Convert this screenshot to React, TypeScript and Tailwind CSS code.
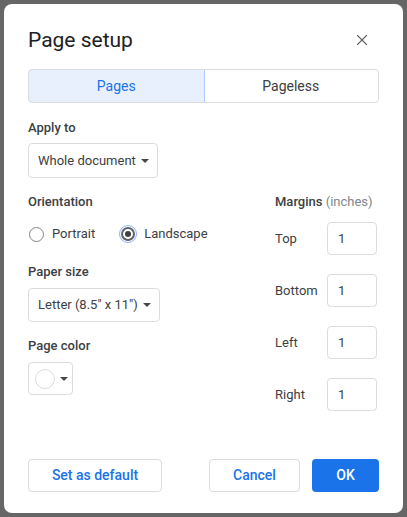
import { X } from 'lucide-react';

const font = { fontFamily: 'Roboto, "Liberation Sans", Arial, sans-serif' };

function Caret() {
  return (
    <svg width="8" height="4" viewBox="0 0 8 4" className="shrink-0">
      <path d="M0 0 L8 0 L4 4 Z" fill="#444746" />
    </svg>
  );
}

function Radio({ checked, label }: { checked?: boolean; label: string }) {
  return (
    <div className="flex items-center gap-[7px]">
      {checked ? (
        <div className="w-[18px] h-[18px] rounded-full border border-[#8ab4f8] flex items-center justify-center">
          <div className="w-[14px] h-[14px] rounded-full border-2 border-[#5f6368] flex items-center justify-center">
            <div className="w-[6px] h-[6px] rounded-full bg-[#3c4043]" />
          </div>
        </div>
      ) : (
        <div className="w-[18px] h-[18px] flex items-center justify-center">
          <div className="w-[15px] h-[15px] rounded-full border border-[#80868b]" />
        </div>
      )}
      <span className="text-[13px] text-[#3c4043] whitespace-nowrap">{label}</span>
    </div>
  );
}

function MarginRow({ label }: { label: string }) {
  return (
    <div className="flex items-center">
      <span className="w-[52px] text-[13px] text-[#3c4043]">{label}</span>
      <div className="w-[50px] h-[33px] rounded border border-[#dadce0] flex items-center pl-[10px] text-[13px] text-[#3c4043]">
        1
      </div>
    </div>
  );
}

export default function App() {
  return (
    <div className="w-[407px] h-[517px] bg-[#666666] p-[4px]" style={font}>
      <div className="h-full bg-white rounded-lg flex flex-col px-6 pt-[22px] pb-[21px]">
        {/* Header */}
        <div className="flex items-center justify-between h-[28px]">
          <h1 className="text-[21px] font-normal text-[#202124] leading-[28px]">Page setup</h1>
          <X size={18} strokeWidth={1.5} className="text-[#5f6368] mr-[8px]" />
        </div>

        {/* Tabs */}
        <div className="mt-[15px] flex h-[34px] rounded border border-[#dadce0] overflow-hidden text-[14px]">
          <div className="flex-1 flex items-center justify-center bg-[#e8f0fe] border border-[#aecbfa] rounded-l text-[#1a73e8] -m-px">
            Pages
          </div>
          <div className="flex-1 flex items-center justify-center text-[#3c4043]">Pageless</div>
        </div>

        {/* Apply to */}
        <div className="mt-[15px] text-[13px] font-medium text-[#3c4043] leading-[20px]">Apply to</div>
        <div className="mt-[5px] w-[130px] h-[35px] rounded border border-[#dadce0] flex items-center justify-between pl-[9px] pr-[8px] text-[13px] text-[#3c4043] whitespace-nowrap">
          <span>Whole document</span>
          <Caret />
        </div>

        <div className="mt-[14px] flex">
          {/* Left column */}
          <div className="flex-1 flex flex-col items-start">
            <div className="text-[13px] font-medium text-[#3c4043] leading-[20px]">Orientation</div>
            <div className="mt-[12px] flex items-center gap-[24px] h-[20px] -ml-[1px]">
              <Radio label="Portrait" />
              <Radio checked label="Landscape" />
            </div>

            <div className="mt-[18px] text-[13px] font-medium text-[#3c4043] leading-[20px]">Paper size</div>
            <div className="mt-[6px] w-[132px] h-[34px] rounded border border-[#dadce0] flex items-center justify-between pl-[9px] pr-[8px] text-[13px] text-[#3c4043] whitespace-nowrap">
              <span>Letter (8.5" x 11")</span>
              <Caret />
            </div>

            <div className="mt-[14px] text-[13px] font-medium text-[#3c4043] leading-[20px]">Page color</div>
            <div className="mt-[6px] w-[45px] h-[33px] rounded border border-[#dadce0] flex items-center pl-[6px] gap-[5px]">
              <div className="w-[20px] h-[20px] rounded-full border border-[#dadce0] bg-white" />
              <Caret />
            </div>
          </div>

          {/* Right column */}
          <div className="w-[104px] pr-[2px] flex flex-col">
            <div className="text-[13px] leading-[20px] text-[#3c4043] whitespace-nowrap">
              <span className="font-medium">Margins</span>{' '}
              <span className="text-[#80868b]">(inches)</span>
            </div>
            <div className="mt-[10px] flex flex-col gap-[19px]">
              <MarginRow label="Top" />
              <MarginRow label="Bottom" />
              <MarginRow label="Left" />
              <MarginRow label="Right" />
            </div>
          </div>
        </div>

        {/* Footer */}
        <div className="mt-auto flex items-center h-[33px] text-[14px] font-medium">
          <div className="w-[134px] h-full rounded border border-[#dadce0] flex items-center justify-center text-[#1a73e8]">
            Set as default
          </div>
          <div className="ml-auto w-[91px] h-full rounded border border-[#dadce0] flex items-center justify-center text-[#1a73e8]">
            Cancel
          </div>
          <div className="ml-[12px] w-[67px] h-full rounded bg-[#1a73e8] flex items-center justify-center text-white">
            OK
          </div>
        </div>
      </div>
    </div>
  );
}
